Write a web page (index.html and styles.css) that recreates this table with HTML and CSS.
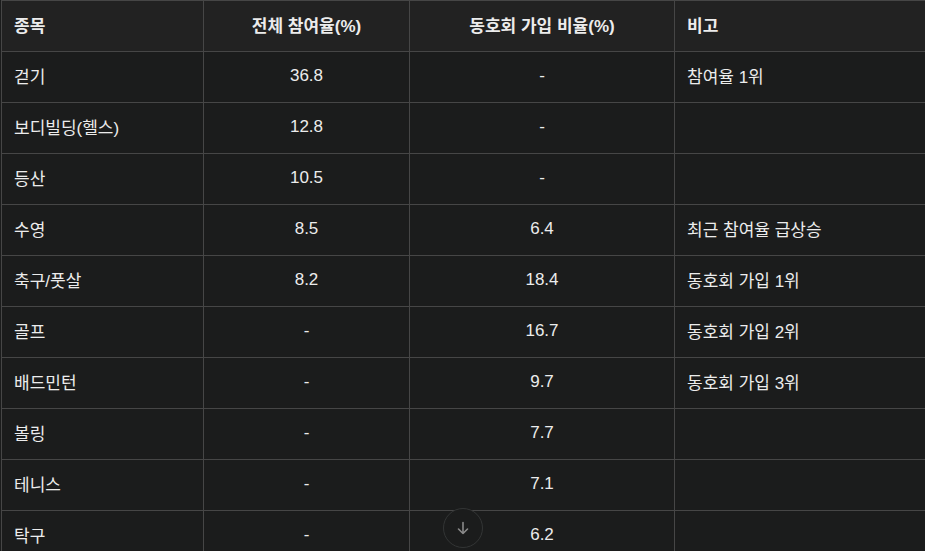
FILE: index.html
```html
<!DOCTYPE html>
<html lang="ko">
<head>
<meta charset="utf-8">
<link rel="stylesheet" href="styles.css">
</head>
<body>
<div class="wrap">
<table class="tbl">
<colgroup>
<col class="c1"><col class="c2"><col class="c3"><col class="c4">
</colgroup>
<thead>
<tr><th>종목</th><th class="ctr">전체 참여율(%)</th><th class="ctr">동호회 가입 비율(%)</th><th>비고</th></tr>
</thead>
<tbody>
<tr><td>걷기</td><td class="ctr">36.8</td><td class="ctr">-</td><td>참여율 1위</td></tr>
<tr><td>보디빌딩(헬스)</td><td class="ctr">12.8</td><td class="ctr">-</td><td></td></tr>
<tr><td>등산</td><td class="ctr">10.5</td><td class="ctr">-</td><td></td></tr>
<tr><td>수영</td><td class="ctr">8.5</td><td class="ctr">6.4</td><td>최근 참여율 급상승</td></tr>
<tr><td>축구/풋살</td><td class="ctr">8.2</td><td class="ctr">18.4</td><td>동호회 가입 1위</td></tr>
<tr><td>골프</td><td class="ctr">-</td><td class="ctr">16.7</td><td>동호회 가입 2위</td></tr>
<tr><td>배드민턴</td><td class="ctr">-</td><td class="ctr">9.7</td><td>동호회 가입 3위</td></tr>
<tr><td>볼링</td><td class="ctr">-</td><td class="ctr">7.7</td><td></td></tr>
<tr><td>테니스</td><td class="ctr">-</td><td class="ctr">7.1</td><td></td></tr>
<tr><td>탁구</td><td class="ctr">-</td><td class="ctr">6.2</td><td></td></tr>
</tbody>
</table>
<button class="scroll-btn" aria-label="아래로">
<svg width="16" height="16" viewBox="0 0 16 16" fill="none" stroke="currentColor" stroke-width="1.6" stroke-linecap="round" stroke-linejoin="round"><path d="M8 2.5v11M3.5 9l4.5 4.5L12.5 9"/></svg>
</button>
</div>
</body>
</html>
```
FILE: styles.css
```css
html, body {
  margin: 0;
  padding: 0;
  background: #1b1c1c;
  overflow: hidden;
  height: 551px;
}
.wrap {
  position: relative;
  padding-left: 1px;
  width: 924px;
  height: 551px;
  overflow: hidden;
}
.tbl {
  border-collapse: collapse;
  table-layout: fixed;
  width: 1000px;
  font-family: "Liberation Sans", "Noto Sans CJK KR", sans-serif;
  font-size: 17px;
  color: #ececec;
}
.c1 { width: 202px; }
.c2 { width: 206px; }
.c3 { width: 265px; }
.c4 { width: 327px; }
.tbl th, .tbl td {
  border: 1px solid #464646;
  height: 51px;
  padding: 0 12px 3px;
  text-align: left;
  vertical-align: middle;
  box-sizing: border-box;
  white-space: nowrap;
}
.tbl th {
  background: #222222;
  font-weight: 700;
}
.tbl td { background: #1b1c1c; }
.tbl .ctr { text-align: center; }
.scroll-btn {
  position: absolute;
  left: 443px;
  top: 508px;
  width: 40px;
  height: 40px;
  border-radius: 50%;
  border: 1px solid #333535;
  background: #1b1c1c;
  color: #8a8a8a;
  display: flex;
  align-items: center;
  justify-content: center;
  padding: 0;
}
```
